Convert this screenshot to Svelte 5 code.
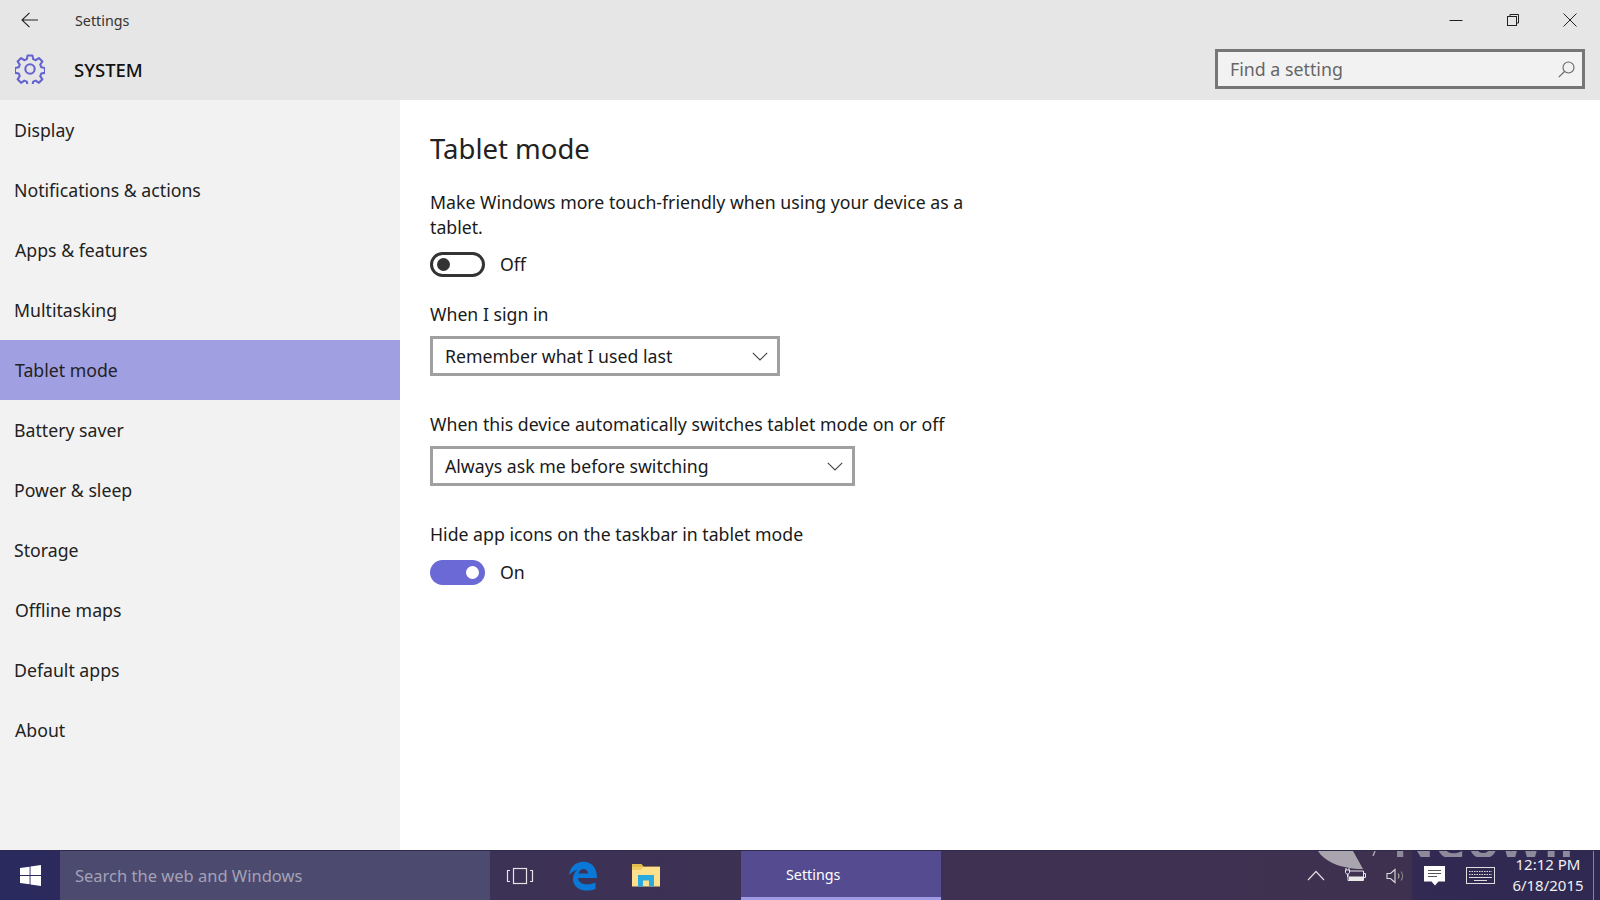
<script>
  const items = [
    ['Display', false], ['Notifications & actions', false], ['Apps & features', true], ['Multitasking', false],
    ['Tablet mode', true, true], ['Battery saver', false], ['Power & sleep', false], ['Storage', false],
    ['Offline maps', true], ['Default apps', false], ['About', true]
  ];
</script>

<div class="window">
  <header class="titlebar">
    <div class="toprow">
      <svg class="back" width="18" height="16" viewBox="0 0 18 16" fill="none" stroke="#222" stroke-width="1.1"><path d="M1 8h16M8.500 .8 1 8l7.500 7.200"/></svg>
      <span class="apptitle">Settings</span>
      <div class="controls">
        <svg width="14" height="14" viewBox="0 0 14 14" stroke="#222" fill="none"><path d="M0.500 7.500h13"/></svg>
        <svg width="14" height="14" viewBox="0 0 14 14" stroke="#222" fill="none"><rect x="1.500" y="3.500" width="9" height="9"/><path d="M4 3.500V1.500h8.500v8.500h-2"/></svg>
        <svg width="14" height="14" viewBox="0 0 14 14" stroke="#222" fill="none"><path d="M.5.500l13 13M13.500.500l-13 13"/></svg>
      </div>
    </div>
    <div class="secondrow">
      <svg class="gear" width="30" height="30" viewBox="0 0 32 32" fill="none" stroke="#6462d0" stroke-width="2.200" stroke-linejoin="round">
        <path d="M13.400 1.500h5.200l.8 4 2.700 1.100 3.400-2.300 3.700 3.700-2.300 3.400 1.100 2.700 4 .8v5.200l-4 .8-1.100 2.700 2.300 3.400-3.700 3.700-3.400-2.300-2.700 1.100-.8 4h-5.200l-.8-4-2.700-1.100-3.400 2.300-3.700-3.700 2.300-3.400-1.100-2.700-4-.8v-5.200l4-.8 1.100-2.700-2.300-3.400 3.700-3.700 3.400 2.300 2.700-1.100z"/>
        <circle cx="16" cy="16" r="5"/>
      </svg>
      <span class="section">SYSTEM</span>
      <div class="search">
        <span>Find a setting</span>
        <svg width="17" height="17" viewBox="0 0 17 17" fill="none" stroke="#666" stroke-width="1.100"><circle cx="10.500" cy="6.500" r="5.500"/><path d="M6.500 10.500.8 16.200"/></svg>
      </div>
    </div>
  </header>

  <div class="main">
    <nav class="sidebar">
      {#each items as [label, nudge, active]}
        <div class="row" class:nudge class:active>{label}</div>
      {/each}
    </nav>
    <section class="content">
      <h1>Tablet mode</h1>
      <p class="wrap">Make Windows more touch-friendly when using your device as a tablet.</p>
      <div class="toggle-row first">
        <span class="toggle off"><i></i></span><span>Off</span>
      </div>
      <p class="label sign">When I sign in</p>
      <div class="select s1"><span>Remember what I used last</span>
        <svg width="16" height="9" viewBox="0 0 16 9" fill="none" stroke="#444" stroke-width="1.100"><path d="M.8.800 8 8l7.200-7.200"/></svg>
      </div>
      <p class="label auto">When this device automatically switches tablet mode on or off</p>
      <div class="select s2"><span>Always ask me before switching</span>
        <svg width="16" height="9" viewBox="0 0 16 9" fill="none" stroke="#444" stroke-width="1.100"><path d="M.8.800 8 8l7.200-7.200"/></svg>
      </div>
      <p class="label hide">Hide app icons on the taskbar in tablet mode</p>
      <div class="toggle-row second">
        <span class="toggle on"><i></i></span><span>On</span>
      </div>
    </section>
  </div>

  <footer class="taskbar">
    <svg class="blob" width="70" height="20" viewBox="0 0 70 20"><path fill="#a9a5ae" d="M2 0C8 10 24 18 47 18L37 0Z"/><path stroke="#a9a5ae" stroke-width="1.500" d="M57 5 59 0"/></svg>
    <div class="watermark"><span class="wm-text">Neowin</span></div>
    <div class="start">
      <svg width="21" height="21" viewBox="0 0 21 21" fill="#fff"><path d="M0 3.100 9.600 1.700v8.300H0zM10.500 1.600 21 0v10h-10.500zM0 11h9.600v8.300L0 17.900zM10.500 11H21v10l-10.500-1.600z"/></svg>
    </div>
    <div class="cortana">Search the web and Windows</div>
    <div class="task-icons">
      <svg class="tv" width="28" height="18" viewBox="0 0 28 18" fill="none" stroke="#e4e4e8" stroke-width="1.200"><rect x="7.500" y="1.500" width="13" height="15"/><path d="M4 3.500H1.500v11H4M24 3.500h2.500v11H24"/></svg>
      <svg class="edge" width="30" height="30" viewBox="0 0 30 30"><path fill="#0a78d7" d="M1 14C2 6 8 .8 15.500 .8 24 .8 29 7 29 17H10c.5 6 8.500 8.500 17.500 4.500V28c-9 3.500-21.500 1.500-22.500-9-.4-4 1.500-8 4.500-10.500C6 10 3 11.500 1 14Zm9.500-1.500H20c0-6-8.500-6-9.500 0Z"/></svg>
      <svg class="folder" width="28" height="24" viewBox="0 0 28 24"><path fill="#e3bd4c" d="M0 1h9.500l2 2.500H28v3H0z"/><path fill="#fce08c" d="M0 4h28v19.500H0z"/><path fill="#f0cc62" d="M0 4h11l-2 3H0z"/><path fill="#2aa9e0" d="M6 12h16v11.500h-5V17.500h-6v6H6z"/></svg>
    </div>
    <div class="running">Settings</div>
    <div class="tray">
      <svg width="18" height="11" viewBox="0 0 18 11" fill="none" stroke="#ddd" stroke-width="1.200" class="t-chev"><path d="M1 10 9 1.500l8 8.500"/></svg>
      <svg class="t-batt" width="21" height="15" viewBox="0 0 21 15" fill="none" stroke="#e8e8e8"><path d="M3 4h15.500v9.500H3z"/><path d="M4 9.500h14v4H4z" fill="#e8e8e8" stroke="none"/><path d="M19 6.500h1.500v4H19"/><path d="M1 1v2M4 1v2M.5 3h4v2.500c0 1-1 1.500-2 1.500s-2-.5-2-1.500z" fill="#3c3255" stroke-width="1"/><path d="M2.500 7v3"/></svg>
      <svg class="t-vol" width="20" height="16" viewBox="0 0 20 16" fill="none" stroke="#ddd" stroke-width="1.100"><path d="M1 5.500h3.500L9 1.500v13l-4.500-4H1z"/><path d="M12 5.500c1.200 1.500 1.200 3.500 0 5" stroke="#aaa"/><path d="M15 3.500c2.200 2.500 2.200 6.500 0 9" stroke="#888"/></svg>
      <svg class="t-msg" width="21" height="21" viewBox="0 0 21 21"><path fill="#fff" d="M0 0h21v15.500h-6.500l-3.500 4-3.500-4H0z"/><path stroke="#555" fill="none" d="M4 4.500h13M4 7.500h13M4 10.500h9"/></svg>
      <svg class="t-kbd" width="29" height="17" viewBox="0 0 29 17" fill="none" stroke="#ddd"><rect x=".5" y=".5" width="28" height="16"/><path d="M3 4.500h23M3 7.500h23" stroke-dasharray="1.500 1"/><path d="M3 10.500h23M8 13.500h13"/></svg>
      <div class="clock"><span>12:12 PM</span><span>6/18/2015</span></div>
      <span class="show-desktop"></span>
    </div>
  </footer>
</div>

<style>
  :global(body) { margin: 0; background: #fff; }
  .window {
    width: 1600px; height: 900px; display: flex; flex-direction: column; overflow: hidden;
    font-family: "Noto Sans", "Open Sans", sans-serif; color: #1a1a1a; font-size: 17.700px;
  }
  .titlebar { height: 100px; flex: none; background: #e6e6e6; display: flex; flex-direction: column; }
  .toprow { height: 40px; display: flex; align-items: center; padding-left: 21px; }
  .back { flex: none; }
  .apptitle { margin-left: 36px; font-size: 14.300px; color: #333; }
  .controls { margin-left: auto; display: flex; gap: 43px; padding-right: 23px; align-items: center; }
  .secondrow { height: 60px; display: flex; align-items: center; padding: 0 15px; margin-top: -1px; }
  .gear { flex: none; }
  .section { margin-left: 29px; font-size: 18.500px; font-weight: 500; color: #111; }
  .search {
    margin-left: auto; box-sizing: border-box; width: 370px; height: 40px; border: 3px solid #767676;
    background: #f2f2f2; display: flex; align-items: center; justify-content: space-between;
    padding: 0 7px 0 12px; color: #666; font-size: 17.800px;
  }
  .main { flex: 1; display: flex; min-height: 0; }
  .sidebar { width: 400px; flex: none; background: #f2f2f2; }
  .row { height: 60px; box-sizing: border-box; display: flex; align-items: center; padding: 0 0 1px 14px; color: #222; }
  .row.nudge { padding-left: 15px; }
  .row.active { background: #a09fe2; }
  .content { flex: 1; padding-left: 30px; }
  h1 { margin: 29px 0 0; font-size: 27.500px; font-weight: 400; line-height: 40px; color: #222; }
  p { margin: 0; }
  .wrap { width: 545px; line-height: 25px; margin-top: 21px; }
  .label { line-height: 25px; }
  .toggle-row { display: flex; align-items: center; gap: 15px; height: 26px; }
  .first { margin-top: 11px; }
  .toggle { box-sizing: border-box; width: 55px; height: 25px; border-radius: 13px; display: flex; align-items: center; }
  .toggle i { width: 13px; height: 13px; border-radius: 50%; display: block; }
  .off { border: 3px solid #333; padding-left: 4px; }
  .off i { background: #333; }
  .on { background: #6b69d6; justify-content: flex-end; padding-right: 6px; }
  .on i { background: #fff; }
  .sign { margin-top: 25px; }
  .select {
    box-sizing: border-box; height: 40px; border: 3px solid #a0a0a0; display: flex; align-items: center;
    justify-content: space-between; padding: 0 9px 0 12px; background: #fff; margin-top: 9px;
  }
  .s1 { width: 350px; }
  .s2 { width: 425px; }
  .auto { margin-top: 36px; }
  .hide { margin-top: 36px; }
  .second { margin-top: 12px; }

  .taskbar {
    height: 50px; flex: none; display: flex; position: relative; overflow: hidden; color: #fff;
    background: linear-gradient(90deg, #2a2a60 0, #2c2a5c 60px, #3c3255 500px, #3e3152 1000px, #3e3150 1411px, #322a52 1413px, #2f2850 1600px);
    border-top: 1px solid #2d2a4e; box-sizing: border-box;
  }
  .blob { position: absolute; left: 1316px; top: 0; }
  .watermark { position: absolute; left: 1392px; top: 0; width: 180px; height: 6px; overflow: hidden; }
  .wm-text {
    position: absolute; left: 0; top: -41px; font-size: 54px; line-height: 54px; color: #8e8a9c;
    font-weight: 600;
  }
  .start { width: 60px; flex: none; display: flex; align-items: center; justify-content: center; position: relative; }
  .cortana {
    width: 430px; flex: none; background: #4c4a6e; color: #a3a2b8; display: flex; align-items: center;
    padding-left: 15px; box-sizing: border-box; font-size: 16.500px; position: relative;
  }
  .task-icons { width: 251px; flex: none; position: relative; display: flex; align-items: center; }
  .tv { margin-left: 16px; }
  .edge { margin-left: 34px; }
  .folder { margin-left: 34px; margin-top: -2px; }
  .running {
    width: 200px; flex: none; background: #544b90; display: flex; align-items: center; padding-left: 45px;
    border-bottom: 3px solid #a09ae4; box-sizing: border-box; font-size: 14.300px; position: relative;
  }
  .tray { margin-left: auto; display: flex; align-items: center; position: relative; color: #f0f0f0; height: 100%; }
  .t-chev { margin-right: 20px; }
  .t-batt { margin-right: 20px; margin-top: -2px; }
  .t-vol { margin-right: 18px; }
  .t-msg { margin-right: 21px; margin-top: 2px; }
  .t-kbd { margin-right: 17px; }
  .clock { display: flex; flex-direction: column; align-items: center; width: 72px; font-size: 15px; line-height: 21px; margin-top: -2px; }
  .show-desktop { width: 1px; height: 100%; background: #8a8598; margin: 0 6px 0 9px; }
</style>
